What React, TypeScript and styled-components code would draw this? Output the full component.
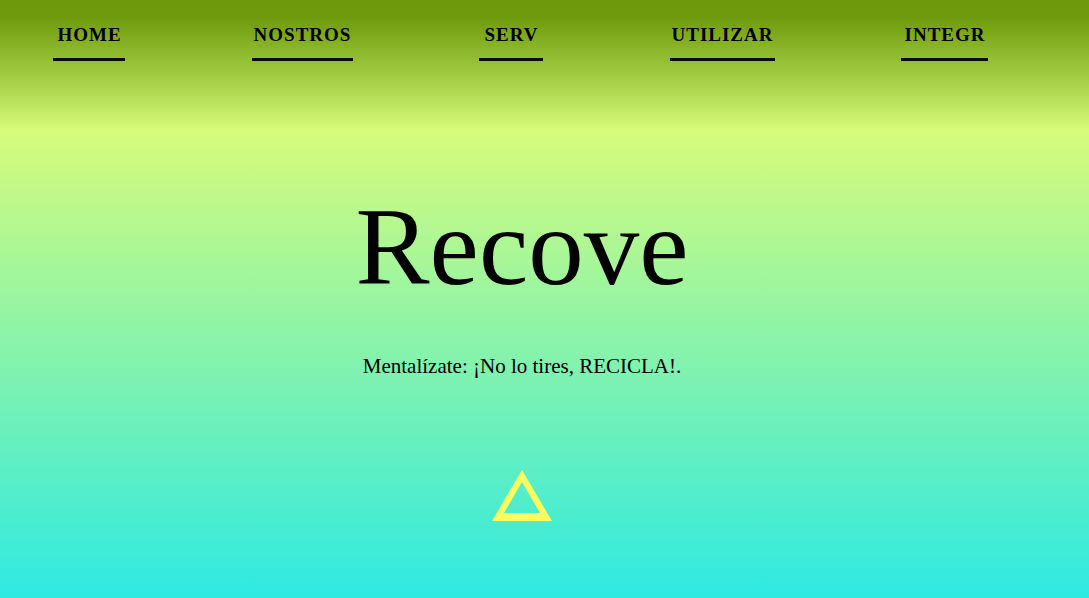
import React from "react";
import styled, { createGlobalStyle } from "styled-components";

const GlobalStyle = createGlobalStyle`
  * { box-sizing: border-box; }
  html, body { margin: 0; padding: 0; }
  body { font-family: "Liberation Serif", "Times New Roman", serif; color: #000; }
`;

const Page = styled.div`
  min-height: 100vh;
  height: 598px;
  overflow: hidden;
  display: flex;
  flex-direction: column;
  background: linear-gradient(
    to bottom,
    #6e990c 0px,
    #6f9a0d 16px,
    #a6cf45 80px,
    #d7fb7b 130px,
    #2deae2 598px
  );
`;

const Nav = styled.nav`
  display: flex;
  align-items: flex-start;
  gap: 126.5px;
  padding: 25px 0 0 53px;
`;

const NavLink = styled.a<{ $w: number }>`
  display: block;
  width: ${(p) => p.$w}px;
  padding: 0 0 14px 1px;
  border-bottom: 3px solid #0a0a0a;
  text-align: center;
  white-space: nowrap;
  font-family: "Liberation Serif", "Times New Roman", serif;
  font-weight: 700;
  font-size: 19px;
  line-height: 1;
  letter-spacing: 1px;
  color: #000;
  text-decoration: none;
`;

const Hero = styled.main`
  display: flex;
  flex-direction: column;
  align-items: center;
  padding: 130px 45px 0 0;
`;

const Title = styled.h1`
  margin: 0;
  font-family: "Liberation Serif", "Times New Roman", serif;
  font-weight: 400;
  font-size: 111px;
  line-height: 1;
`;

const Subtitle = styled.p`
  margin: 54px 0 0;
  font-family: "Liberation Serif", "Times New Roman", serif;
  font-size: 21px;
  line-height: 1;
`;

const Arrow = styled.svg`
  display: block;
  margin-top: 93px;
`;

const links: { label: string; w: number }[] = [
  { label: "HOME", w: 72 },
  { label: "NOSTROS", w: 101 },
  { label: "SERV", w: 64 },
  { label: "UTILIZAR", w: 105 },
  { label: "INTEGR", w: 87 },
];

export default function App() {
  return (
    <>
      <GlobalStyle />
      <Page>
        <Nav>
          {links.map((l) => (
            <NavLink key={l.label} href="#" $w={l.w}>
              {l.label}
            </NavLink>
          ))}
        </Nav>
        <Hero>
          <Title>Recove</Title>
          <Subtitle>Mentalízate: ¡No lo tires, RECICLA!.</Subtitle>
          <Arrow width="60" height="51" viewBox="0 0 60 51">
            <path
              fillRule="evenodd"
              fill="#fdfc5e"
              d="M30 0 L60 51 L0 51 Z M30 12 L12 43 L48 43 Z"
            />
          </Arrow>
        </Hero>
      </Page>
    </>
  );
}
